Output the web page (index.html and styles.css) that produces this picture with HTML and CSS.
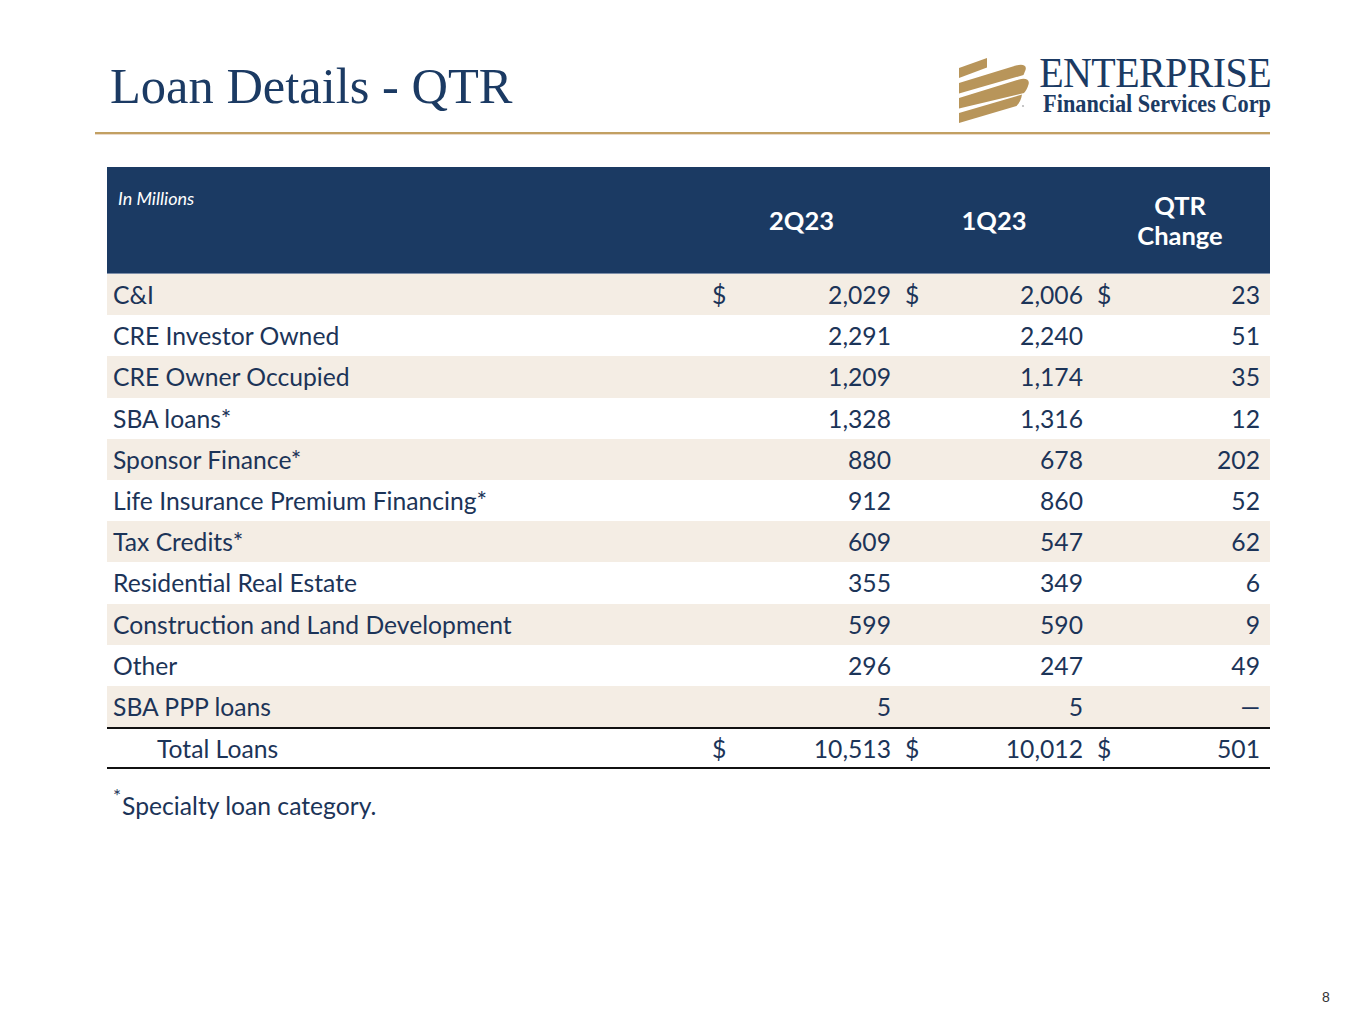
FILE: index.html
```html
<!DOCTYPE html>
<html lang="en">
<head>
<meta charset="utf-8">
<title>Loan Details - QTR</title>
<link rel="stylesheet" href="styles.css">
</head>
<body>
<div class="slide">
  <header class="top">
    <h1 class="title">Loan Details - QTR</h1>
    <div class="logo">
      <svg class="mark" viewBox="0 0 80 74" width="80" height="74" aria-hidden="true">
        <g fill="#b8955a">
          <path d="M5,16 L33,6 L33,15.5 L5,26 Z"/>
          <path d="M5,31 L62,13.5 C69,11.5 73,13.5 71.5,18 L69.5,23 L5,41.5 Z"/>
          <path d="M5,46 L65,27.5 C72,25.5 76,28 74.5,32.5 C73.5,36 72,39 70,41 L5,56.5 Z"/>
          <path d="M5,61 L68,42.5 C67.5,46.5 65.5,51 62.5,54 L5,71 Z"/>
        </g>
        <circle cx="69" cy="54" r="1.1" fill="#b9b9b9"/>
      </svg>
      <div class="logo-text">
        <div class="logo-name">ENTERPRISE</div>
        <div class="logo-sub">Financial Services Corp</div>
      </div>
    </div>
  </header>
  <div class="rule"></div>

  <div class="table">
    <div class="thead">
      <div class="th th-label"><span class="units">In Millions</span></div>
      <div class="th">2Q23</div>
      <div class="th">1Q23</div>
      <div class="th">QTR<br>Change</div>
    </div>

    <div class="row alt">
      <div class="label">C&amp;I</div>
      <div class="cell"><span>$</span><span>2,029</span></div>
      <div class="cell"><span>$</span><span>2,006</span></div>
      <div class="cell last"><span>$</span><span>23</span></div>
    </div>
    <div class="row">
      <div class="label">CRE Investor Owned</div>
      <div class="cell"><span></span><span>2,291</span></div>
      <div class="cell"><span></span><span>2,240</span></div>
      <div class="cell last"><span></span><span>51</span></div>
    </div>
    <div class="row alt">
      <div class="label">CRE Owner Occupied</div>
      <div class="cell"><span></span><span>1,209</span></div>
      <div class="cell"><span></span><span>1,174</span></div>
      <div class="cell last"><span></span><span>35</span></div>
    </div>
    <div class="row">
      <div class="label">SBA loans*</div>
      <div class="cell"><span></span><span>1,328</span></div>
      <div class="cell"><span></span><span>1,316</span></div>
      <div class="cell last"><span></span><span>12</span></div>
    </div>
    <div class="row alt">
      <div class="label">Sponsor Finance*</div>
      <div class="cell"><span></span><span>880</span></div>
      <div class="cell"><span></span><span>678</span></div>
      <div class="cell last"><span></span><span>202</span></div>
    </div>
    <div class="row">
      <div class="label">Life Insurance Premium Financing*</div>
      <div class="cell"><span></span><span>912</span></div>
      <div class="cell"><span></span><span>860</span></div>
      <div class="cell last"><span></span><span>52</span></div>
    </div>
    <div class="row alt">
      <div class="label">Tax Credits*</div>
      <div class="cell"><span></span><span>609</span></div>
      <div class="cell"><span></span><span>547</span></div>
      <div class="cell last"><span></span><span>62</span></div>
    </div>
    <div class="row">
      <div class="label">Residential Real Estate</div>
      <div class="cell"><span></span><span>355</span></div>
      <div class="cell"><span></span><span>349</span></div>
      <div class="cell last"><span></span><span>6</span></div>
    </div>
    <div class="row alt">
      <div class="label">Construction and Land Development</div>
      <div class="cell"><span></span><span>599</span></div>
      <div class="cell"><span></span><span>590</span></div>
      <div class="cell last"><span></span><span>9</span></div>
    </div>
    <div class="row">
      <div class="label">Other</div>
      <div class="cell"><span></span><span>296</span></div>
      <div class="cell"><span></span><span>247</span></div>
      <div class="cell last"><span></span><span>49</span></div>
    </div>
    <div class="row alt">
      <div class="label">SBA PPP loans</div>
      <div class="cell"><span></span><span>5</span></div>
      <div class="cell"><span></span><span>5</span></div>
      <div class="cell last"><span></span><span>—</span></div>
    </div>
    <div class="row total">
      <div class="label indent">Total Loans</div>
      <div class="cell"><span>$</span><span>10,513</span></div>
      <div class="cell"><span>$</span><span>10,012</span></div>
      <div class="cell last"><span>$</span><span>501</span></div>
    </div>
  </div>

  <p class="note"><sup>*</sup>Specialty loan category.</p>

  <div class="page-num">8</div>
</div>
</body>
</html>
```

FILE: styles.css
```css
html, body {
  margin: 0;
  padding: 0;
  background: #ffffff;
}

.slide {
  position: relative;
  width: 1365px;
  height: 1024px;
  box-sizing: border-box;
  padding-top: 52px;
  font-family: "Lato", "Carlito", "Liberation Sans", sans-serif;
  color: #1c3458;
}

.top {
  display: flex;
  justify-content: space-between;
  align-items: flex-start;
  margin: 0 95px 0 110px;
  height: 80px;
}

.title {
  margin: 0;
  padding-top: 3.5px;
  font-family: "Liberation Serif", "Times New Roman", serif;
  font-weight: normal;
  font-size: 50.5px;
  line-height: 60px;
  color: #1b3a63;
}

.logo {
  display: flex;
  align-items: flex-start;
  gap: 5px;
  margin-right: -1px;
}

.mark {
  display: block;
}

.logo-text {
  display: flex;
  flex-direction: column;
  align-items: flex-end;
  padding-top: 6.5px;
  font-family: "Liberation Serif", "Times New Roman", serif;
  color: #1b3a63;
}

.logo-name {
  font-size: 40px;
  line-height: 30px;
  letter-spacing: -0.6px;
  transform: scaleY(1.06);
  transform-origin: right 28.5px;
}

.logo-sub {
  margin-top: 3.5px;
  font-size: 22.3px;
  font-weight: bold;
  line-height: 26px;
  transform: scaleY(1.15);
  transform-origin: right 20.5px;
}

.rule {
  height: 2px;
  background: #c2a062;
  margin: 0 95px 0 95px;
  box-shadow: 0 1px 0 #ead9c9;
}

.table {
  margin: 33px 95px 0 107px;
  width: 1163px;
}

.thead {
  display: grid;
  grid-template-columns: 598px 193px 192px 180px;
  height: 106px;
  background: #1b3a63;
  color: #ffffff;
  border-bottom: 1px solid #7d8ea8;
}

.th {
  display: flex;
  align-items: center;
  justify-content: center;
  text-align: center;
  font-weight: bold;
  font-size: 25.5px;
  line-height: 30px;
}

.th-label {
  align-items: flex-start;
  justify-content: flex-start;
  padding: 22px 0 0 11px;
  text-align: left;
}

.units {
  font-style: italic;
  font-weight: normal;
  font-size: 18px;
  line-height: 18px;
}

.row {
  display: grid;
  grid-template-columns: 598px 193px 192px 180px;
  height: 41.2px;
  align-items: center;
  font-size: 24.7px;
}

.row.alt {
  background: #f4ede4;
}

.label {
  padding-left: 6px;
  white-space: nowrap;
}

.label.indent {
  padding-left: 50px;
}

.cell {
  display: flex;
  justify-content: space-between;
  padding: 0 7px 0 7px;
}

.cell.last {
  padding-right: 10px;
}

.row.total {
  border-top: 2px solid #111111;
  border-bottom: 2px solid #111111;
  height: 38px;
}

.note {
  margin: 22px 0 0 113px;
  font-size: 24.7px;
  line-height: 30px;
  color: #1c3458;
}

.note sup {
  font-size: 19px;
  line-height: 1;
  vertical-align: top;
  position: relative;
  top: -5px;
  margin-right: 1px;
}

.page-num {
  position: absolute;
  left: 1322px;
  top: 989px;
  font-family: "Liberation Sans", Arial, sans-serif;
  font-size: 14px;
  color: #333333;
}
```
